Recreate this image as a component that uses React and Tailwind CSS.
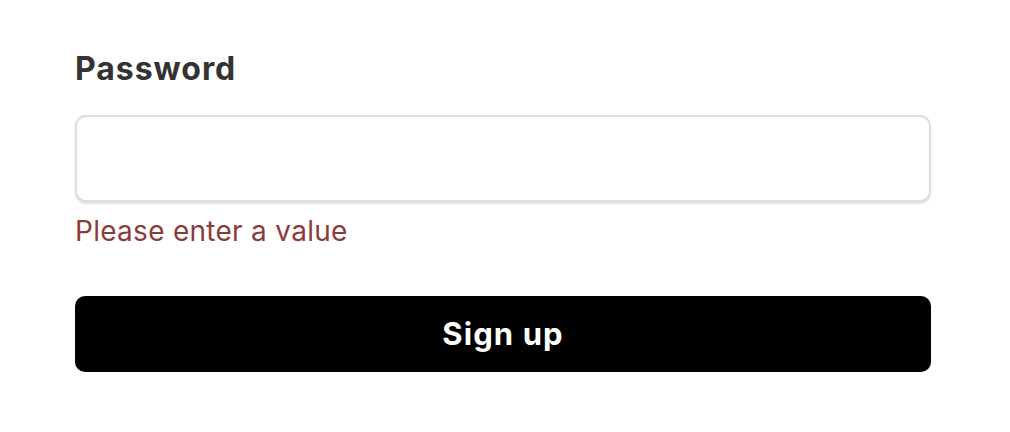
import React, { useState } from 'react';

const SignUpForm = () => {
  const [password, setPassword] = useState('');

  return (
    <div className="w-[1010px] h-[432px] bg-white pl-[75px] pr-[79px] pt-[49px] font-['Inter','Liberation_Sans',sans-serif]">
      <form onSubmit={e => e.preventDefault()} className="flex flex-col">
        <label className="block text-[32px] leading-[40px] tracking-[0.03em] font-bold text-[#333333]">
          Password
        </label>
        <input
          type="password"
          value={password}
          onChange={e => setPassword(e.target.value)}
          className="mt-[26px] h-[87px] w-full rounded-[11px] border-2 border-[#dedede] bg-white px-4 text-[28px] shadow-[0_2px_2px_rgba(0,0,0,0.12)] outline-none"
        />
        <p className="mt-[11px] text-[28px] leading-[36px] tracking-[0.01em] text-[#8c3b3b]">
          Please enter a value
        </p>
        <button
          type="submit"
          className="mt-[47px] h-[76px] w-full rounded-[10px] bg-black text-[31px] tracking-[0.035em] font-bold text-white"
        >
          Sign up
        </button>
      </form>
    </div>
  );
};

export default function App() {
  return <SignUpForm />;
}
